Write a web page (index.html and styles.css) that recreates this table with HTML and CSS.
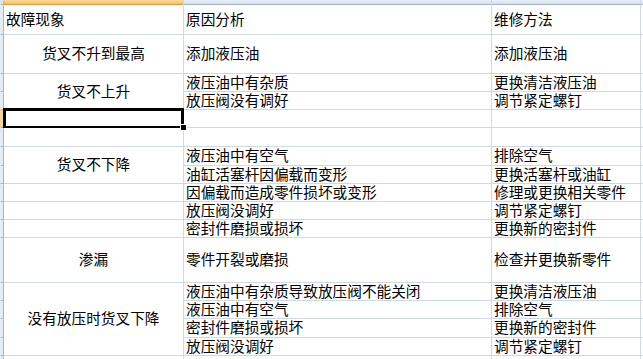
FILE: index.html
```html
<!DOCTYPE html>
<html lang="zh-CN">
<head>
<meta charset="utf-8">
<title>故障现象</title>
<link rel="stylesheet" href="styles.css">
</head>
<body>
<div class="sheet">
  <div class="corner"></div><div class="colhead sel"></div><div class="colhead"></div><div class="colhead"></div><div class="colhead"></div>

  <div class="rowhead"></div><div class="cell">故障现象</div><div class="cell">原因分析</div><div class="cell">维修方法</div><div class="cell"></div>
  <div class="rowhead"></div><div class="cell center">货叉不升到最高</div><div class="cell">添加液压油</div><div class="cell">添加液压油</div><div class="cell"></div>
  <div class="rowhead"></div><div class="cell center span2">货叉不上升</div><div class="cell">液压油中有杂质</div><div class="cell">更换清洁液压油</div><div class="cell"></div>
  <div class="rowhead"></div><div class="cell">放压阀没有调好</div><div class="cell">调节紧定螺钉</div><div class="cell"></div>
  <div class="rowhead sel"></div><div class="cell active"></div><div class="cell"></div><div class="cell"></div><div class="cell"></div>
  <div class="rowhead"></div><div class="cell"></div><div class="cell"></div><div class="cell"></div><div class="cell"></div>
  <div class="rowhead"></div><div class="cell center span2">货叉不下降</div><div class="cell">液压油中有空气</div><div class="cell">排除空气</div><div class="cell"></div>
  <div class="rowhead"></div><div class="cell">油缸活塞杆因偏载而变形</div><div class="cell">更换活塞杆或油缸</div><div class="cell"></div>
  <div class="rowhead"></div><div class="cell"></div><div class="cell">因偏载而造成零件损坏或变形</div><div class="cell">修理或更换相关零件</div><div class="cell"></div>
  <div class="rowhead"></div><div class="cell"></div><div class="cell">放压阀没调好</div><div class="cell">调节紧定螺钉</div><div class="cell"></div>
  <div class="rowhead"></div><div class="cell"></div><div class="cell">密封件磨损或损坏</div><div class="cell">更换新的密封件</div><div class="cell"></div>
  <div class="rowhead"></div><div class="cell center">渗漏</div><div class="cell">零件开裂或磨损</div><div class="cell">检查并更换新零件</div><div class="cell"></div>
  <div class="rowhead"></div><div class="cell center span4">没有放压时货叉下降</div><div class="cell">液压油中有杂质导致放压阀不能关闭</div><div class="cell">更换清洁液压油</div><div class="cell"></div>
  <div class="rowhead"></div><div class="cell">液压油中有空气</div><div class="cell">排除空气</div><div class="cell"></div>
  <div class="rowhead"></div><div class="cell">密封件磨损或损坏</div><div class="cell">更换新的密封件</div><div class="cell"></div>
  <div class="rowhead"></div><div class="cell">放压阀没调好</div><div class="cell">调节紧定螺钉</div><div class="cell"></div>
  <div class="rowhead"></div><div class="cell"></div><div class="cell"></div><div class="cell"></div><div class="cell"></div>
</div>
</body>
</html>
```
FILE: styles.css
```css
html, body {
  margin: 0;
  padding: 0;
  background: #ffffff;
  overflow: hidden;
}

.sheet {
  width: 643px;
  height: 359px;
  overflow: hidden;
  display: grid;
  grid-template-columns: 3px 179px 307px 148px 2px;
  grid-template-rows: 4px 29px 38px 17px 17px 17px 18px 18px 17px 17px 17px 17px 44px 17px 17px 18px 17px 20px;
  gap: 1px;
  background: #d0d7e5;
  font-family: "Liberation Sans", "Noto Sans CJK SC", sans-serif;
  font-size: 14.67px;
  line-height: 16px;
  color: #000000;
}

.corner {
  background: #dfe7f2;
  box-shadow: 1px 1px 0 #9eb6ce;
}

.colhead {
  background: linear-gradient(#e8eef7, #d6e0ed);
  box-shadow: 0 1px 0 #9eb6ce;
}

.colhead.sel {
  background: linear-gradient(#f9d99f, #f2c262);
  box-shadow: 0 1px 0 #f29536;
}

.rowhead {
  background: #e4ecf7;
  box-shadow: 1px 1px 0 #9eb6ce;
}

.rowhead.sel {
  background: #f8d38c;
  box-shadow: 1px 1px 0 #f29536;
}

.cell {
  background: #ffffff;
  display: flex;
  align-items: center;
  padding-left: 2px;
  white-space: nowrap;
  overflow: visible;
  min-width: 0;
}

.cell.center {
  justify-content: center;
  padding-left: 0;
}

.span2 {
  grid-row: span 2;
}

.span4 {
  grid-row: span 4;
}

.active {
  position: relative;
}

.active::after {
  content: "";
  position: absolute;
  top: -2px;
  left: -1px;
  right: -1px;
  bottom: -1px;
  border: 3px solid #000000;
  border-bottom-width: 2px;
}

.active::before {
  content: "";
  position: absolute;
  right: -4px;
  bottom: -4px;
  width: 5px;
  height: 5px;
  background: #000000;
  border: 1px solid #ffffff;
  z-index: 2;
}
```
